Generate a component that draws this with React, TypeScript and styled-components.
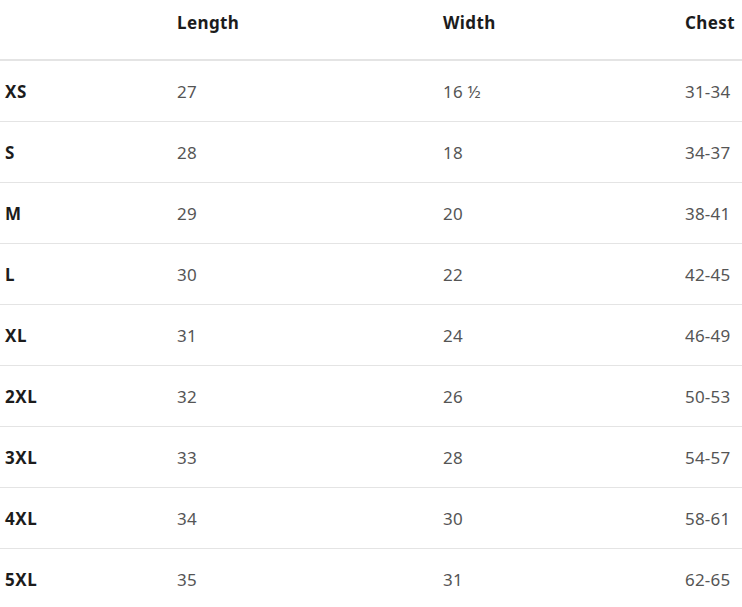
import React from "react";
import styled, { createGlobalStyle } from "styled-components";

const Global = createGlobalStyle`
  html, body { margin: 0; padding: 0; background: #fff; }
  body { font-family: "Noto Sans", "Open Sans", "Liberation Sans", sans-serif; }
`;

const Table = styled.table`
  width: 760px;
  border-collapse: collapse;
  table-layout: fixed;
  font-size: 17px;
`;

const HeadCell = styled.th<{ $w?: number }>`
  width: ${(p) => (p.$w ? `${p.$w}px` : "auto")};
  height: 60px;
  padding: 0 0 15px 5px;
  box-sizing: border-box;
  text-align: left;
  font-weight: 700;
  font-size: 17px;
  letter-spacing: 0.4px;
  color: #1c1c1c;
  border-bottom: 2px solid #e4e4e4;
  vertical-align: middle;
`;

const Row = styled.tr<{ $last?: boolean }>`
  border-bottom: ${(p) => (p.$last ? "none" : "1px solid #e4e4e4")};
`;

const Cell = styled.td<{ $label?: boolean }>`
  height: 61px;
  padding: 2px 0 0 5px;
  box-sizing: border-box;
  vertical-align: middle;
  font-weight: ${(p) => (p.$label ? 700 : 400)};
  letter-spacing: ${(p) => (p.$label ? "0.6px" : "0.2px")};
  color: ${(p) => (p.$label ? "#1c1c1c" : "#555")};
`;

const rows: [string, string, string, string][] = [
  ["XS", "27", "16 ½", "31-34"],
  ["S", "28", "18", "34-37"],
  ["M", "29", "20", "38-41"],
  ["L", "30", "22", "42-45"],
  ["XL", "31", "24", "46-49"],
  ["2XL", "32", "26", "50-53"],
  ["3XL", "33", "28", "54-57"],
  ["4XL", "34", "30", "58-61"],
  ["5XL", "35", "31", "62-65"],
];

export default function App() {
  return (
    <>
      <Global />
      <Table>
        <thead>
          <tr>
            <HeadCell $w={172}></HeadCell>
            <HeadCell $w={266}>Length</HeadCell>
            <HeadCell $w={242}>Width</HeadCell>
            <HeadCell>Chest</HeadCell>
          </tr>
        </thead>
        <tbody>
          {rows.map((r, i) => (
            <Row key={r[0]} $last={i === rows.length - 1}>
              <Cell $label>{r[0]}</Cell>
              <Cell>{r[1]}</Cell>
              <Cell>{r[2]}</Cell>
              <Cell>{r[3]}</Cell>
            </Row>
          ))}
        </tbody>
      </Table>
    </>
  );
}
